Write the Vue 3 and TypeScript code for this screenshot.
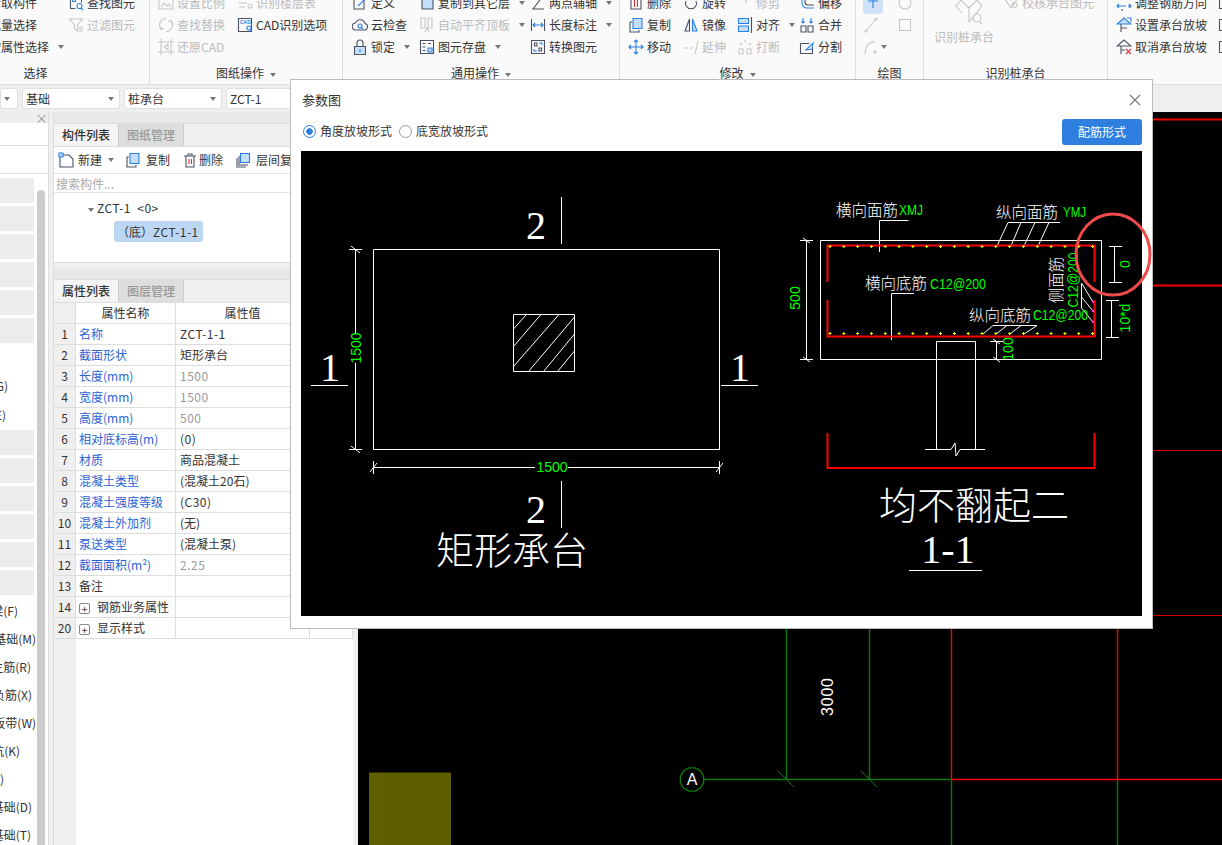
<script setup lang="ts">
import { h } from 'vue';

type Seg = [string, string, string?];
type Item = { label?: string; icon?: string; off?: boolean; caret?: boolean; active?: boolean };
type Col = { w: number; items: Item[] };
type Group = { w: number; pad: number; ml?: number; title: string; caret?: boolean; cols: Col[] };

const D = '#4a5262';
const B = '#2f80e4';
const L = '#c4def8';
const G = '#c6c6c6';
const R = '#e0303a';

const icons: Record<string, Seg[]> = {
  find: [['M2.5 1.5h11v6M2.5 1.5v12h5', D], ['M4.5 4h3v2.5h-3z', B], ['M9 11a2.5 2.5 0 1 0 5 0a2.5 2.5 0 1 0-5 0M13 13l2 2', B]],
  filter: [['M1.5 2h13l-5 6v6l-3-2V8z', G], ['M11 10h4M11 12h4M11 14h4', G]],
  ratio: [['M1 14V4h14v10zM3 12l3-4 3 3 2-2 2 3', G]],
  floor: [['M2 4h8M2 8h8M2 12h6M11 11a2 2 0 1 0 4 0a2 2 0 1 0-4 0', G]],
  replace: [['M8 1.5a6.5 6.5 0 0 0-5 10.6M8 14.5a6.5 6.5 0 0 0 5-10.6M2 9l1 3.5 3-1.2M14 7l-1-3.5-3 1.2', G]],
  restore: [['M3 0v16M0 3h16M13 0v16M0 13h16M10 5L6 8l4 3z', G]],
  cad: [['M1.5 1.5h13v13h-13z', D], ['M10 11a2 2 0 1 0 4 0a2 2 0 1 0-4 0M13 12.5l2 2', B]],
  define: [['M2 2h10v12H2z', D], ['M6 11l8-8', B]],
  cloud: [['M4 13a3.5 3.5 0 0 1-.5-7 5 5 0 0 1 9.5.5 3.3 3.3 0 0 1-.5 6.5z', D], ['M6 9a2 2 0 1 0 4 0a2 2 0 1 0-4 0M9.5 10.5l1.5 1.5', B]],
  lock: [['M2.5 7.5h11v8h-11z', D, L], ['M5 7.5V4a3 3 0 0 1 6 0v3.5', D], ['M8 10v3', B]],
  copyLayer: [['M3 1h8l3 3v10H3z', D, L]],
  autoAlign: [['M2 1h4v10H2zM9 1h4v10H9zM6 15l2-4 2 4', G]],
  save: [['M1.5 1.5h13v13h-13z', D], ['M3.5 4.5h3M3.5 8h3M3.5 11.5h3M9 4.5h3', D], ['M9 9h4v4H9z', B, L]],
  twoPoint: [['M2 14h12M3 14L13 1', D]],
  lenDim: [['M1.5 2v12M14.5 2v12', D], ['M3 8h10M5 6L3 8l2 2M11 6l2 2-2 2', B]],
  convert: [['M1.5 1.5h13v13h-13z', D], ['M4.5 4h2.5v3H4.5zM9 9h2.5v3H9z', D], ['M9 4h3v2M7 12H4v-2', B]],
  del: [['M3 3h10v11H3z', D], ['M6.5 5v7M9.5 5v7', R]],
  copy: [['M4 5H2v10h9v-2', D], ['M5 1.5h9v10H5z', B, L]],
  move: [['M8 1v14M1 8h14M6 3l2-2 2 2M6 13l2 2 2-2M3 6L1 8l2 2M13 6l2 2-2 2', B]],
  rotate: [['M3 6a5.5 5.5 0 1 0 10 0', D]],
  mirror: [['M6.5 2L2 14h4.5z', D], ['M9.5 2L14 14H9.5z', B, L]],
  extend: [['M1 9h4M7 9h3M15 2l-3 13', G]],
  trim: [['M1 4h12M9 1v7M13 1l-2 4', G]],
  align: [['M1.5 1.5h10v5h-10zM1.5 9h10v5.5h-10z', B, L], ['M14.5 0v16', D]],
  breakUp: [['M2 10h4v5H2zM10 10h4v5h-4zM3 6l2-2M12 4l2 2M7 2h2', G]],
  offset: [['M3 0v8a5 5 0 0 0 5 5h7', B], ['M6 0v7a3 3 0 0 0 3 3h6', D]],
  merge: [['M2 9h5v6H2zM9 9h5v6H9z', D], ['M4 1v5M2.5 4.5L4 6l1.5-1.5M12 1v5M10.5 4.5L12 6l1.5-1.5', B]],
  split: [['M1.5 4.5h9M1.5 4.5v10h12V8', D], ['M7 11l7-7-1 6z', B]],
  point: [['M8 0v13M3 6h10', B]],
  line: [['M3 14L13 2', G], ['M2 14a1 1 0 1 0 2 0a1 1 0 1 0-2 0M12 2a1 1 0 1 0 2 0a1 1 0 1 0-2 0', G]],
  circle: [['M2 8a6 6 0 1 0 12 0a6 6 0 1 0-12 0', G]],
  rect: [['M2.5 2.5h11v11h-11z', G]],
  arc: [['M2 15C2 7 7 2 12 3M11 13a1 1 0 1 0 2 0a1 1 0 1 0-2 0', G]],
  check: [['M1 3l4-2 3 4 3-4 4 2-7 10zM9 10a2.5 2.5 0 1 0 5 0a2.5 2.5 0 1 0-5 0', G]],
  adjust: [['M1 11h9M3 9l-2 2 2 2M15 11h-3M13 9l2 2-2 2', B], ['M6 14v2M10 1h5', D]],
  setSlope: [['M8 1L1 7h14z', B, L], ['M5 7v8M5 11h6', D], ['M11 1h4v4', B]],
  cancelSlope: [['M8 1L1 7h14z', D], ['M5 7v8M5 11h4', D], ['M10 10l5 5M15 10l-5 5', R]],
  extra: [['M1.5 2.5h13v11h-13z', D], ['M5 7h6', D]],
  newItem: [['M3 3h8l4 4v8H2V5', D], ['M1 1h4v4H1z', B, L]],
  trash: [['M2 4h12M6 4V2h4v2M4 4v11h8V4', D], ['M7 7v5M9.5 7v5', R]],
  layer: [['M2 6v9h9M4 4v9h9', D], ['M5.5 1.5h9v9h-9z', B, L]],
  big: [['M7 2l8 8v14M23 2l-8 8M7 2L2 8l6 7M23 2l5 6-13 16', G], ['M19 20a4 4 0 1 0 8 0a4 4 0 1 0-8 0M25 23l3 3', G]],
};

// small helper so ribbon, toolbar and dialog all draw icons the same way
const Icon = (props: { name: string; size?: number }) => {
  const size = props.size ?? 16;
  const view = props.name === 'big' ? 30 : 16;
  const segs = icons[props.name] ?? [];
  const kids = segs.map((s) => h('path', { d: s[0], stroke: s[1], fill: s[2] ?? 'none', 'stroke-width': 1.1 }));
  if (props.name === 'cad') {
    kids.push(h('text', { x: 3, y: 7, 'font-size': 5, fill: B, 'font-family': 'Liberation Sans, sans-serif', 'font-weight': 700 }, 'CAD'));
  }
  return h('svg', { width: size, height: size, viewBox: `0 0 ${view} ${view}`, class: 'ico' }, kids);
};
Icon.props = ['name', 'size'];

const groups: Group[] = [
  { w: 228, pad: 48, ml: -78, title: '选择', cols: [
    { w: 98, items: [{ label: '拾取构件' }, { label: '批量选择' }, { label: '按属性选择', caret: true }] },
    { w: 80, items: [{ label: '查找图元', icon: 'find' }, { label: '过滤图元', icon: 'filter', off: true }] },
  ] },
  { w: 193, pad: 8, title: '图纸操作', caret: true, cols: [
    { w: 79, items: [{ label: '设置比例', icon: 'ratio', off: true }, { label: '查找替换', icon: 'replace', off: true }, { label: '还原CAD', icon: 'restore', off: true }] },
    { w: 100, items: [{ label: '识别楼层表', icon: 'floor', off: true }, { label: 'CAD识别选项', icon: 'cad' }] },
  ] },
  { w: 277, pad: 9, title: '通用操作', caret: true, cols: [
    { w: 67, items: [{ label: '定义', icon: 'define' }, { label: '云检查', icon: 'cloud' }, { label: '锁定', icon: 'lock', caret: true }] },
    { w: 111, items: [{ label: '复制到其它层', icon: 'copyLayer', caret: true }, { label: '自动平齐顶板', icon: 'autoAlign', off: true, caret: true }, { label: '图元存盘', icon: 'save', caret: true }] },
    { w: 85, items: [{ label: '两点辅轴', icon: 'twoPoint', caret: true }, { label: '长度标注', icon: 'lenDim', caret: true }, { label: '转换图元', icon: 'convert' }] },
  ] },
  { w: 236, pad: 8, title: '修改', caret: true, cols: [
    { w: 55, items: [{ label: '删除', icon: 'del' }, { label: '复制', icon: 'copy' }, { label: '移动', icon: 'move' }] },
    { w: 54, items: [{ label: '旋转', icon: 'rotate' }, { label: '镜像', icon: 'mirror' }, { label: '延伸', icon: 'extend', off: true }] },
    { w: 62, items: [{ label: '修剪', icon: 'trim', off: true }, { label: '对齐', icon: 'align', caret: true }, { label: '打断', icon: 'breakUp', off: true }] },
    { w: 50, items: [{ label: '偏移', icon: 'offset' }, { label: '合并', icon: 'merge' }, { label: '分割', icon: 'split' }] },
  ] },
  { w: 68, pad: 7, title: '绘图', cols: [
    { w: 34, items: [{ icon: 'point', active: true }, { icon: 'line' }, { icon: 'arc', caret: true }] },
    { w: 20, items: [{ icon: 'circle' }, { icon: 'rect' }] },
  ] },
];

const slopeItems: Item[] = [
  { label: '调整钢筋方向', icon: 'adjust' },
  { label: '设置承台放坡', icon: 'setSlope' },
  { label: '取消承台放坡', icon: 'cancelSlope' },
];

// left tree list, only the tail of each label shows
const blocks = [178, 430].flatMap((top) => Array.from({ length: 6 }, (_, i) => top + i * 28));

const leftText = [
  { y: 386, text: '承台(G)', end: 7 },
  { y: 415, text: '承台(E)', end: 5 },
  { y: 611, text: '基础梁(F)', end: 17 },
  { y: 639, text: '筏板基础(M)', end: 35 },
  { y: 667, text: '筏板主筋(R)', end: 30 },
  { y: 695, text: '筏板负筋(X)', end: 31 },
  { y: 723, text: '基础板带(W)', end: 35 },
  { y: 751, text: '集水坑(K)', end: 19 },
  { y: 779, text: '柱墩(Y)', end: 3 },
  { y: 807, text: '独立基础(D)', end: 31 },
  { y: 835, text: '条形基础(T)', end: 30 },
];

const props_ = [
  { no: 1, name: '名称', val: 'ZCT-1-1', blue: true },
  { no: 2, name: '截面形状', val: '矩形承台', blue: true },
  { no: 3, name: '长度(mm)', val: '1500', blue: true, dim: true },
  { no: 4, name: '宽度(mm)', val: '1500', blue: true, dim: true },
  { no: 5, name: '高度(mm)', val: '500', blue: true, dim: true },
  { no: 6, name: '相对底标高(m)', val: '(0)', blue: true },
  { no: 7, name: '材质', val: '商品混凝土', blue: true },
  { no: 8, name: '混凝土类型', val: '(混凝土20石)', blue: true },
  { no: 9, name: '混凝土强度等级', val: '(C30)', blue: true },
  { no: 10, name: '混凝土外加剂', val: '(无)', blue: true },
  { no: 11, name: '泵送类型', val: '(混凝土泵)', blue: true },
  { no: 12, name: '截面面积(m²)', val: '2.25', blue: true, dim: true },
  { no: 13, name: '备注', val: '' },
  { no: 14, name: '钢筋业务属性', val: '', plus: true },
  { no: 20, name: '显示样式', val: '', plus: true },
];

const isLatin = (s: string) => /^[\w.\-()]+$/.test(s);

// rebar dots in the section view
const dotsX = Array.from({ length: 20 }, (_, i) => 830 + i * 13.82);
const plus = (x: number, y: number) => `M${x - 1.5} ${y}h3M${x} ${y - 1.5}v3`;
const rebarDots = dotsX.flatMap((x) => [plus(x, 246.5), plus(x, 333.5)]).join('');

const bubble = Array.from({ length: 12 }, (_, i) => {
  const a = (i * Math.PI) / 6 + Math.PI / 12;
  return `${692 + 12 * Math.cos(a)},${779.5 + 12 * Math.sin(a)}`;
}).join(' ');

const plan = [
  'M373.5 249.5H719.5V449.5H373.5Z',
  'M513.5 314.5H574.5V371.5H513.5Z',
  'M513.5 329L526 315M513.5 346.5L540.5 315M513.5 366.5L558.5 315M528.5 371.5L574.5 317M543.5 371.5L574.5 334M557.5 371.5L574.5 351',
  'M561.5 197V244M561.5 481V528M311 385.5H348M721 385.5H758',
  'M355.5 249.5V333M355.5 363V449.5M349 249.5H362M349 449.5H362M351 246L360 253M351 446L360 453',
  'M373.5 467.5H535M568 467.5H719.5M373.5 461V474M719.5 461V474M370 472L377 463M716 472L723 463',
];

const section = [
  'M820.5 240.5H1101.5V359.5H820.5Z',
  'M879.5 220.5H908.5M879.5 220.5V252',
  'M1008 222.5H1060M1008 222.5L997 246M1021 222.5L1011 246M1035 222.5L1024 246M1049 222.5L1038 246',
  'M891.5 293.5H914M891.5 293.5V340',
  'M993 325.5H1037M993 325.5L983 334M1007 325.5L996 334M1021 325.5L1010 334M1037 325.5L1024 334',
  'M1081.5 283V308M1081.5 283L1093 302M1081.5 297L1093 311M1081.5 308L1093 322',
  'M806.5 240.5V359.5M800 240.5H813M800 359.5H813M803 238L810 243M803 357L810 362',
  'M1114.5 246V282M1109 246.5H1122M1109 282.5H1122',
  'M1111.5 300V337M1106 300.5H1119M1106 337.5H1119',
  'M996.5 341V359M990 341.5H1003M993 339L1000 344M993 357L1000 362',
  'M936.5 341.5H975.5M936.5 341.5V449M975.5 341.5V449',
  'M925 449.5H951L955 443L956 456L960 449.5H985',
  'M909 570.5H982',
];
</script>

<template>
  <div class="app">
    <header class="ribbon">
      <section
        v-for="g in groups"
        :key="g.title"
        class="group"
        :style="{ width: g.w + 'px', marginLeft: (g.ml ?? 0) + 'px', paddingLeft: g.pad + 'px' }"
      >
        <div class="cols">
          <div v-for="(c, ci) in g.cols" :key="ci" class="col" :style="{ width: c.w + 'px' }">
            <div
              v-for="it in c.items"
              :key="it.label ?? it.icon"
              class="item"
              :class="{ off: it.off, active: it.active, bare: !it.label }"
            >
              <Icon v-if="it.icon" :name="it.icon" />
              <span v-else class="ico-gap"></span>
              <span v-if="it.label">{{ it.label }}</span>
              <i v-if="it.caret" class="caret"></i>
            </div>
          </div>
        </div>
        <div class="group-title" :style="{ marginLeft: -g.pad + 'px' }">
          {{ g.title }}<i v-if="g.caret" class="caret"></i>
        </div>
      </section>

      <section class="group group-pile">
        <div class="cols">
          <div class="big off">
            <Icon name="big" :size="30" />
            <span>识别桩承台</span>
          </div>
          <div class="col">
            <div class="item off"><Icon name="check" /><span>校核承台图元</span></div>
          </div>
        </div>
        <div class="group-title pile-title">识别桩承台</div>
      </section>

      <section class="group group-slope">
        <div class="cols">
          <div class="col slope-col">
            <div v-for="it in slopeItems" :key="it.label" class="item">
              <Icon :name="it.icon!" /><span>{{ it.label }}</span>
            </div>
          </div>
          <div class="col">
            <div class="item"><Icon name="extra" /></div>
            <div class="item"><Icon name="extra" /></div>
            <div class="item"><Icon name="extra" /></div>
          </div>
        </div>
      </section>
    </header>

    <div class="selectors">
      <div class="combo combo-first"><i class="caret"></i></div>
      <div class="combo">基础<i class="caret"></i></div>
      <div class="combo">桩承台<i class="caret"></i></div>
      <div class="combo combo-last">ZCT-1<i class="caret"></i></div>
    </div>

    <main class="body">
      <aside class="left">
        <div class="left-head"><span class="left-x">×</span></div>
        <div class="left-tabs"></div>
        <div class="left-tools"></div>
        <div class="left-scroll"></div>
        <div v-for="t in blocks" :key="t" class="left-block" :style="{ top: t - 112 + 'px' }"></div>
        <div
          v-for="t in leftText"
          :key="t.text"
          class="left-text"
          :style="{ top: t.y - 120 + 'px', right: 47 - t.end + 'px' }"
        >{{ t.text }}</div>
      </aside>

      <div class="mid">
        <div class="panel-head"></div>
        <div class="tabs">
          <span class="tab on">构件列表</span>
          <span class="tab">图纸管理</span>
        </div>
        <div class="tools">
          <span class="tool tool-new"><Icon name="newItem" />新建<i class="caret"></i></span>
          <span class="tool"><Icon name="copy" />复制</span>
          <span class="tool tool-del"><Icon name="trash" />删除</span>
          <span class="tool"><Icon name="layer" />层间复制</span>
        </div>
        <div class="search">搜索构件...</div>
        <div class="tree">
          <div class="tree-root"><i class="caret"></i><span class="latin">ZCT-1&nbsp;&nbsp;&lt;0&gt;</span></div>
          <div class="tree-leaf">（底）<span class="latin">ZCT-1-1</span></div>
        </div>

        <div class="panel-head second"></div>
        <div class="tabs">
          <span class="tab on">属性列表</span>
          <span class="tab">图层管理</span>
        </div>
        <div class="table">
          <div class="tr th">
            <span class="c-no"></span>
            <span class="c-name">属性名称</span>
            <span class="c-val">属性值</span>
            <span class="c-ext"></span>
          </div>
          <div v-for="p in props_" :key="p.no" class="tr">
            <span class="c-no">{{ p.no }}</span>
            <span class="c-name" :class="{ blue: p.blue }">
              <b v-if="p.plus" class="plus">+</b>{{ p.name }}
            </span>
            <span class="c-val" :class="{ dim: p.dim, latin: isLatin(p.val) }">{{ p.val }}</span>
            <span class="c-ext"></span>
          </div>
          <div class="table-rest"><span class="c-no"></span></div>
        </div>
      </div>

      <div class="canvas">
        <svg width="864" height="733" viewBox="358 112 864 733">
          <rect x="369" y="773" width="82" height="72" fill="#5f5f00" />
          <path d="M369 772.5H451" stroke="#2c2c00" />
          <g fill="none" stroke-width="1.4">
            <path d="M786.5 112V780M869.5 112V780M951.5 780V845M1117.5 780V845" stroke="#0a7a0a" />
            <path d="M704 779.5H951" stroke="#0a7a0a" />
            <path d="M778 771L794 787M861 771L877 787" stroke="#0a7a0a" stroke-width="1" />
            <path d="M951.5 112V779M1117.5 112V779M951 779.5H1222" stroke="#ff0000" />
            <path d="M951 119.5H1222M951 285.5H1222" stroke="#f00000" stroke-width="1.8" />
            <path d="M951 450.5H1222M951 615.5H1222" stroke="#d80000" stroke-width="1" />
            <polygon :points="bubble" stroke="#0a7a0a" />
          </g>
          <text x="692" y="785" class="grid-label" text-anchor="middle">A</text>
          <text
            x="827"
            y="697"
            class="grid-label"
            text-anchor="middle"
            dominant-baseline="central"
            textLength="38"
            transform="rotate(-90 827 697)"
          >3000</text>
        </svg>
      </div>
    </main>

    <div class="dialog">
      <div class="dlg-title">
        <span>参数图</span>
        <svg width="14" height="14" viewBox="0 0 14 14" class="dlg-close">
          <path d="M2 2l10 10M12 2L2 12" stroke="#777" stroke-width="1.1" fill="none" />
        </svg>
      </div>
      <div class="dlg-bar">
        <label class="radio on"><i></i>角度放坡形式</label>
        <label class="radio"><i></i>底宽放坡形式</label>
        <button class="primary">配筋形式</button>
      </div>
      <svg class="drawing" width="841" height="465" viewBox="301 151 841 465">
        <rect x="301" y="151" width="841" height="465" fill="#000" />
        <g fill="none" stroke="#fff" stroke-width="1">
          <path v-for="d in plan" :key="d" :d="d" />
          <path v-for="d in section" :key="d" :d="d" />
        </g>
        <path
          d="M827.5 282V245.5H1094.5V282M827.5 300V336.5H1094.5V300M827.5 433V468H1094.5V433"
          fill="none"
          stroke="#ff0000"
          stroke-width="2"
        />
        <path :d="rebarDots" fill="none" stroke="#ffff00" stroke-width="1" />
        <path d="M1092 301h2v2h-2zM1092 310h2v2h-2zM1092 321h2v2h-2z" fill="#ff30ff" />

        <text x="536" y="239" class="serif" text-anchor="middle">2</text>
        <text x="536" y="523" class="serif" text-anchor="middle">2</text>
        <text x="330" y="381" class="serif" text-anchor="middle">1</text>
        <text x="740" y="381" class="serif" text-anchor="middle">1</text>
        <text x="948" y="563" class="serif" text-anchor="middle">1-1</text>
        <text x="436" y="564" class="cad-title">矩形承台</text>
        <text x="879" y="519" class="cad-title">均不翻起二</text>

        <text x="836" y="216" class="cad-cn">横向面筋</text>
        <text x="996" y="218" class="cad-cn">纵向面筋</text>
        <text x="865" y="289" class="cad-cn">横向底筋</text>
        <text x="969" y="321" class="cad-cn">纵向底筋</text>
        <text x="1062" y="280" class="cad-cn" text-anchor="middle" transform="rotate(-90 1062 280)">侧面筋</text>

        <text x="899" y="215" class="cad-num" textLength="24" lengthAdjust="spacingAndGlyphs">XMJ</text>
        <text x="1063" y="217" class="cad-num" textLength="23" lengthAdjust="spacingAndGlyphs">YMJ</text>
        <text x="930" y="289" class="cad-num" textLength="56" lengthAdjust="spacingAndGlyphs">C12@200</text>
        <text x="1033" y="320" class="cad-num" textLength="55" lengthAdjust="spacingAndGlyphs">C12@200</text>
        <text x="1078" y="280" class="cad-num" text-anchor="middle" textLength="55" lengthAdjust="spacingAndGlyphs" transform="rotate(-90 1078 280)">C12@200</text>
        <text x="552" y="472" class="cad-num" text-anchor="middle">1500</text>
        <text x="361" y="348" class="cad-num" text-anchor="middle" transform="rotate(-90 361 348)">1500</text>
        <text x="800" y="298" class="cad-num" text-anchor="middle" transform="rotate(-90 800 298)">500</text>
        <text x="1130" y="264" class="cad-num" text-anchor="middle" transform="rotate(-90 1130 264)">0</text>
        <text x="1130" y="318" class="cad-num" text-anchor="middle" transform="rotate(-90 1130 318)">10*d</text>
        <text x="1013" y="349" class="cad-num" text-anchor="middle" transform="rotate(-90 1013 349)">100</text>

        <ellipse cx="1113" cy="254.5" rx="37" ry="40.5" fill="none" stroke="#f04a4a" stroke-width="3" />
      </svg>
    </div>
  </div>
</template>

<style>
html,
body {
  margin: 0;
  overflow: hidden;
}
</style>

<style scoped>
.app {
  position: relative;
  width: 1222px;
  height: 845px;
  overflow: hidden;
  display: flex;
  flex-direction: column;
  background: #efefef;
  color: #333;
  font-family: "Noto Sans CJK SC", sans-serif;
  font-size: 12px;
  line-height: 16px;
}

.ribbon {
  flex: none;
  height: 85px;
  box-sizing: border-box;
  display: flex;
  overflow: hidden;
  background: #fafafa;
  border-bottom: 1px solid #ddd;
}

.group {
  flex: none;
  box-sizing: border-box;
  height: 84px;
  border-right: 1px solid #ddd;
  position: relative;
}

.cols {
  display: flex;
  height: 66px;
  margin-top: -8px;
}

.col {
  flex: none;
  display: flex;
  flex-direction: column;
}

.item {
  height: 22px;
  display: flex;
  align-items: center;
  gap: 3px;
  white-space: nowrap;
}

.item.off,
.big.off {
  color: #bbb;
}

.item.bare .caret {
  margin-left: -1px;
}

.item.active {
  width: 20px;
  height: 22px;
  justify-content: center;
  background: #cfe2f7;
  border-radius: 3px;
}

.ico {
  flex: none;
  display: block;
}

.ico-gap {
  width: 16px;
  flex: none;
}

.caret {
  display: inline-block;
  width: 0;
  height: 0;
  margin-left: 6px;
  border-left: 3px solid transparent;
  border-right: 3px solid transparent;
  border-top: 4px solid #777;
  vertical-align: middle;
}

.group-title {
  margin-top: 7px;
  text-align: center;
  height: 16px;
}

.group-pile {
  width: 184px;
  padding-left: 10px;
}

.big {
  width: 69px;
  flex: none;
  display: flex;
  flex-direction: column;
  padding-top: 6px;
}

.big .ico {
  margin-left: 20px;
  margin-bottom: 1px;
}

.pile-title {
  margin-left: -10px;
}

.group-slope {
  width: 130px;
  padding-left: 8px;
  border-right: none;
}

.slope-col {
  width: 102px;
}

.selectors {
  flex: none;
  height: 27px;
  display: flex;
  gap: 4px;
  padding-top: 3px;
  box-sizing: border-box;
}

.combo {
  flex: none;
  width: 98px;
  height: 21px;
  box-sizing: border-box;
  padding-left: 3px;
  background: #fff;
  border: 1px solid #e0e0e0;
  border-radius: 3px;
  display: flex;
  align-items: center;
  justify-content: space-between;
  padding-right: 5px;
}

.combo-first {
  width: 18px;
}

.combo-first .caret {
  margin-left: 0;
}

.body {
  flex: 1;
  min-height: 0;
  display: flex;
}

.left {
  position: relative;
  flex: none;
  width: 48px;
  background: #fff;
  border-right: 1px solid #ddd;
  overflow: hidden;
}

.left-head {
  height: 11px;
  background: #eee;
  position: relative;
}

.left-x {
  position: absolute;
  left: 35px;
  top: 0;
  font-size: 13px;
  line-height: 12px;
  color: #999;
}

.left-tabs {
  height: 22px;
  border-bottom: 1px solid #ddd;
}

.left-tools {
  height: 27px;
  border-bottom: 1px solid #ddd;
}

.left-scroll {
  position: absolute;
  left: 37px;
  top: 78px;
  bottom: 0;
  width: 8px;
  background: #ccc;
  border-radius: 4px 4px 0 0;
}

.left-block {
  position: absolute;
  left: 0;
  width: 34px;
  height: 25px;
  background: #ececec;
}

.left-text {
  position: absolute;
  white-space: nowrap;
}

.mid {
  flex: none;
  width: 299px;
  margin-left: 4px;
  background: #efefef;
  border-left: 1px solid #ddd;
  display: flex;
  flex-direction: column;
}

.panel-head {
  height: 11px;
  flex: none;
  background: #e8e8e8;
  border-bottom: 1px solid #ddd;
}

.panel-head.second {
  margin-top: 5px;
}

.tabs {
  height: 23px;
  flex: none;
  display: flex;
  box-sizing: border-box;
  border-bottom: 1px solid #ddd;
}

.tab {
  width: 65px;
  box-sizing: border-box;
  text-align: center;
  line-height: 22px;
  color: #999;
  font-weight: 500;
  background: #dedede;
  border-right: 1px solid #ccc;
}

.tab.on {
  color: #333;
  background: #f4f4f4;
}

.tools {
  height: 27px;
  flex: none;
  box-sizing: border-box;
  display: flex;
  align-items: center;
  padding-left: 4px;
  gap: 12px;
  background: #fff;
  border-bottom: 1px solid #e4e4e4;
  white-space: nowrap;
  overflow: hidden;
}

.tool {
  display: flex;
  align-items: center;
  gap: 5px;
}

.tool-new {
  gap: 4px;
  margin-right: -1px;
}

.tool-new .caret {
  margin-left: 2px;
}

.tool-del {
  gap: 1px;
}

.search {
  height: 19px;
  flex: none;
  box-sizing: border-box;
  padding-left: 2px;
  line-height: 19px;
  background: #fff;
  color: #aaa;
  border-bottom: 1px solid #e4e4e4;
}

.tree {
  height: 70px;
  flex: none;
  box-sizing: border-box;
  background: #fff;
  border-bottom: 1px solid #ddd;
  padding: 7px 0 0 34px;
}

.tree-root {
  height: 16px;
  margin-bottom: 5px;
}

.tree-root .caret {
  margin: 0 3px 0 0;
}

.tree-leaf {
  margin-left: 26px;
  width: 89px;
  height: 21px;
  line-height: 21px;
  box-sizing: border-box;
  padding-left: 3px;
  background: #bdd7f3;
  border-radius: 3px;
  white-space: nowrap;
}

.latin {
  letter-spacing: 0.5px;
}

.table {
  flex: 1;
  display: flex;
  flex-direction: column;
  background: #fff;
}

.tr {
  display: flex;
  height: 21px;
  flex: none;
  box-sizing: border-box;
  border-bottom: 1px solid #ddd;
}

.tr > span {
  box-sizing: border-box;
  border-right: 1px solid #ddd;
  line-height: 20px;
  white-space: nowrap;
  overflow: hidden;
}

.c-no {
  width: 22px;
  flex: none;
  background: #efefef;
  text-align: center;
}

.c-name {
  width: 100px;
  flex: none;
  padding-left: 3px;
}

.c-val {
  width: 134px;
  flex: none;
  padding-left: 4px;
}

.c-ext {
  flex: 1;
}

.th .c-name,
.th .c-val {
  text-align: center;
  padding-left: 0;
}

.blue {
  color: #2b62d6;
}

.dim {
  color: #999;
}

.plus {
  display: inline-block;
  width: 11px;
  height: 11px;
  line-height: 10px;
  margin: 0 7px 0 0;
  box-sizing: border-box;
  border: 1px solid #888;
  border-radius: 2px;
  text-align: center;
  font-weight: 400;
  font-size: 10px;
  vertical-align: -1px;
}

.table-rest {
  flex: 1;
  display: flex;
}

.canvas {
  flex: 1;
  min-width: 0;
  margin-left: 5px;
  background: #000;
  overflow: hidden;
}

.canvas svg {
  display: block;
}

.grid-label {
  fill: #fff;
  font-family: "Liberation Sans", sans-serif;
  font-size: 16px;
}

.dialog {
  position: absolute;
  left: 290px;
  top: 79px;
  width: 863px;
  height: 550px;
  box-sizing: border-box;
  background: #fff;
  border: 1px solid #bcbcbc;
  padding: 0 10px;
}

.dlg-title {
  height: 39px;
  display: flex;
  align-items: center;
  justify-content: space-between;
  font-size: 13px;
  padding-left: 1px;
}

.dlg-bar {
  height: 32px;
  display: flex;
  align-items: flex-start;
  gap: 7px;
  padding-left: 2px;
}

.radio {
  display: flex;
  align-items: center;
  height: 24px;
  gap: 4px;
  color: #333;
}

.radio i {
  width: 13px;
  height: 13px;
  box-sizing: border-box;
  border: 1px solid #999;
  border-radius: 50%;
  background: #fff;
}

.radio.on i {
  border-color: #2e7fe0;
  background: radial-gradient(circle, #2e7fe0 0 3px, #fff 3.5px);
}

.primary {
  margin-left: auto;
  width: 80px;
  height: 26px;
  border: none;
  border-radius: 3px;
  background: #2e7fe0;
  color: #fff;
  font: inherit;
}

.drawing {
  display: block;
  overflow: visible;
}

.serif {
  fill: #fff;
  font-family: "Liberation Serif", serif;
  font-size: 40px;
}

.cad-title {
  fill: #fff;
  font-family: "Noto Sans CJK SC", sans-serif;
  font-weight: 300;
  font-size: 38px;
}

.cad-cn {
  fill: #fff;
  font-family: "Noto Sans CJK SC", sans-serif;
  font-weight: 300;
  font-size: 15.5px;
}

.cad-num {
  fill: #00ff00;
  font-family: "Liberation Sans", sans-serif;
  font-size: 14px;
}
</style>
